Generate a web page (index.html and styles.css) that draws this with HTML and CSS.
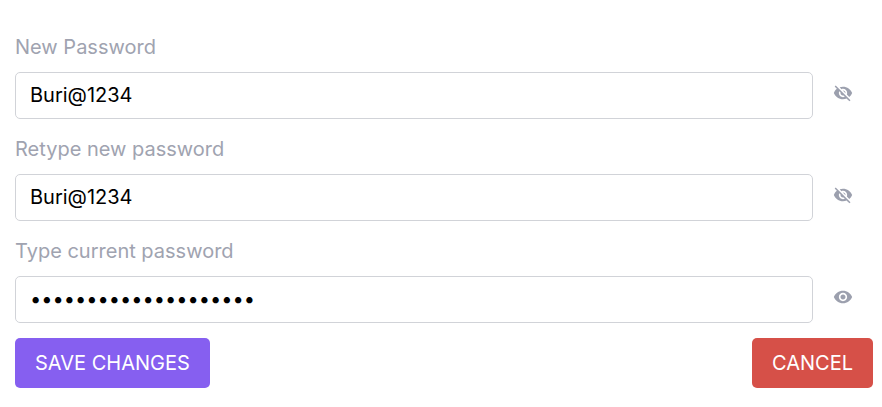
FILE: index.html
```html
<!DOCTYPE html>
<html lang="en">
<head>
<meta charset="utf-8">
<title>Change password</title>
<link rel="stylesheet" href="styles.css">
</head>
<body>
<form class="password-form">
  <div class="field">
    <label for="new-password">New Password</label>
    <div class="control">
      <input id="new-password" type="text" value="Buri@1234">
      <button class="toggle" type="button" aria-label="Hide new password">
        <svg viewBox="0 0 24 24"><path d="M12 7c2.76 0 5 2.24 5 5 0 .65-.13 1.26-.36 1.83l2.92 2.92c1.51-1.26 2.7-2.89 3.43-4.75-1.73-4.39-6-7.5-11-7.5-1.4 0-2.74.25-3.98.7l2.16 2.16C10.74 7.13 11.35 7 12 7zM2 4.27l2.28 2.28.46.46C3.08 8.3 1.78 10.02 1 12c1.73 4.39 6 7.5 11 7.5 1.55 0 3.03-.3 4.38-.84l.42.42L19.73 22 21 20.73 3.27 3 2 4.27zM7.53 9.8l1.55 1.55c-.05.21-.08.43-.08.65 0 1.66 1.34 3 3 3 .22 0 .44-.03.65-.08l1.55 1.55c-.67.33-1.41.53-2.2.53-2.76 0-5-2.24-5-5 0-.79.2-1.53.53-2.2zm4.31-.78l3.15 3.15.02-.16c0-1.66-1.34-3-3-3l-.17.01z"/></svg>
      </button>
    </div>
  </div>
  <div class="field">
    <label for="retype-password">Retype new password</label>
    <div class="control">
      <input id="retype-password" type="text" value="Buri@1234">
      <button class="toggle" type="button" aria-label="Hide retyped password">
        <svg viewBox="0 0 24 24"><path d="M12 7c2.76 0 5 2.24 5 5 0 .65-.13 1.26-.36 1.83l2.92 2.92c1.51-1.26 2.7-2.89 3.43-4.75-1.73-4.39-6-7.5-11-7.5-1.4 0-2.74.25-3.98.7l2.16 2.16C10.74 7.13 11.35 7 12 7zM2 4.27l2.28 2.28.46.46C3.08 8.3 1.78 10.02 1 12c1.73 4.39 6 7.5 11 7.5 1.55 0 3.03-.3 4.38-.84l.42.42L19.73 22 21 20.73 3.27 3 2 4.27zM7.53 9.8l1.55 1.55c-.05.21-.08.43-.08.65 0 1.66 1.34 3 3 3 .22 0 .44-.03.65-.08l1.55 1.55c-.67.33-1.41.53-2.2.53-2.76 0-5-2.24-5-5 0-.79.2-1.53.53-2.2zm4.31-.78l3.15 3.15.02-.16c0-1.66-1.34-3-3-3l-.17.01z"/></svg>
      </button>
    </div>
  </div>
  <div class="field">
    <label for="current-password">Type current password</label>
    <div class="control">
      <input id="current-password" type="password" value="abcdefghijklmnopqrst">
      <button class="toggle" type="button" aria-label="Show current password">
        <svg viewBox="0 0 24 24"><path d="M12 4.5C7 4.5 2.73 7.61 1 12c1.73 4.39 6 7.5 11 7.5s9.27-3.11 11-7.5c-1.73-4.39-6-7.5-11-7.5zM12 17c-2.76 0-5-2.24-5-5s2.24-5 5-5 5 2.24 5 5-2.24 5-5 5zm0-8c-1.66 0-3 1.34-3 3s1.34 3 3 3 3-1.34 3-3-1.34-3-3-3z"/></svg>
      </button>
    </div>
  </div>
  <div class="actions">
    <button class="btn save" type="submit">SAVE CHANGES</button>
    <button class="btn cancel" type="button">CANCEL</button>
  </div>
</form>
</body>
</html>
```
FILE: styles.css
```css
* {
  box-sizing: border-box;
}

body {
  margin: 0;
  background: #fff;
  font-family: Inter, sans-serif;
  font-size: 20px;
  line-height: 30px;
}

.password-form {
  padding: 32px 9px 19px 15px;
}

.field {
  margin-bottom: 15px;
}

.field label {
  display: block;
  margin-bottom: 10px;
  color: #a0a3b0;
}

.control {
  display: flex;
  align-items: center;
  gap: 20px;
  padding-right: 20px;
}

.control input {
  flex: 1;
  min-width: 0;
  height: 47px;
  padding: 0 14px 2px;
  border: 1px solid #d1d3d8;
  border-radius: 5px;
  background: #fff;
  color: #000;
  font: inherit;
}

.toggle {
  display: flex;
  margin-bottom: 5px;
  padding: 0;
  border: 0;
  background: none;
  color: #9ca0ae;
}

.toggle svg {
  width: 20px;
  height: 20px;
  fill: currentColor;
}

.actions {
  display: flex;
  justify-content: space-between;
}

.btn {
  height: 50px;
  padding: 0 20px;
  border: 0;
  border-radius: 5px;
  color: #fff;
  font: inherit;
}

.save {
  background: #865ff0;
}

.cancel {
  background: #d65048;
}
```
